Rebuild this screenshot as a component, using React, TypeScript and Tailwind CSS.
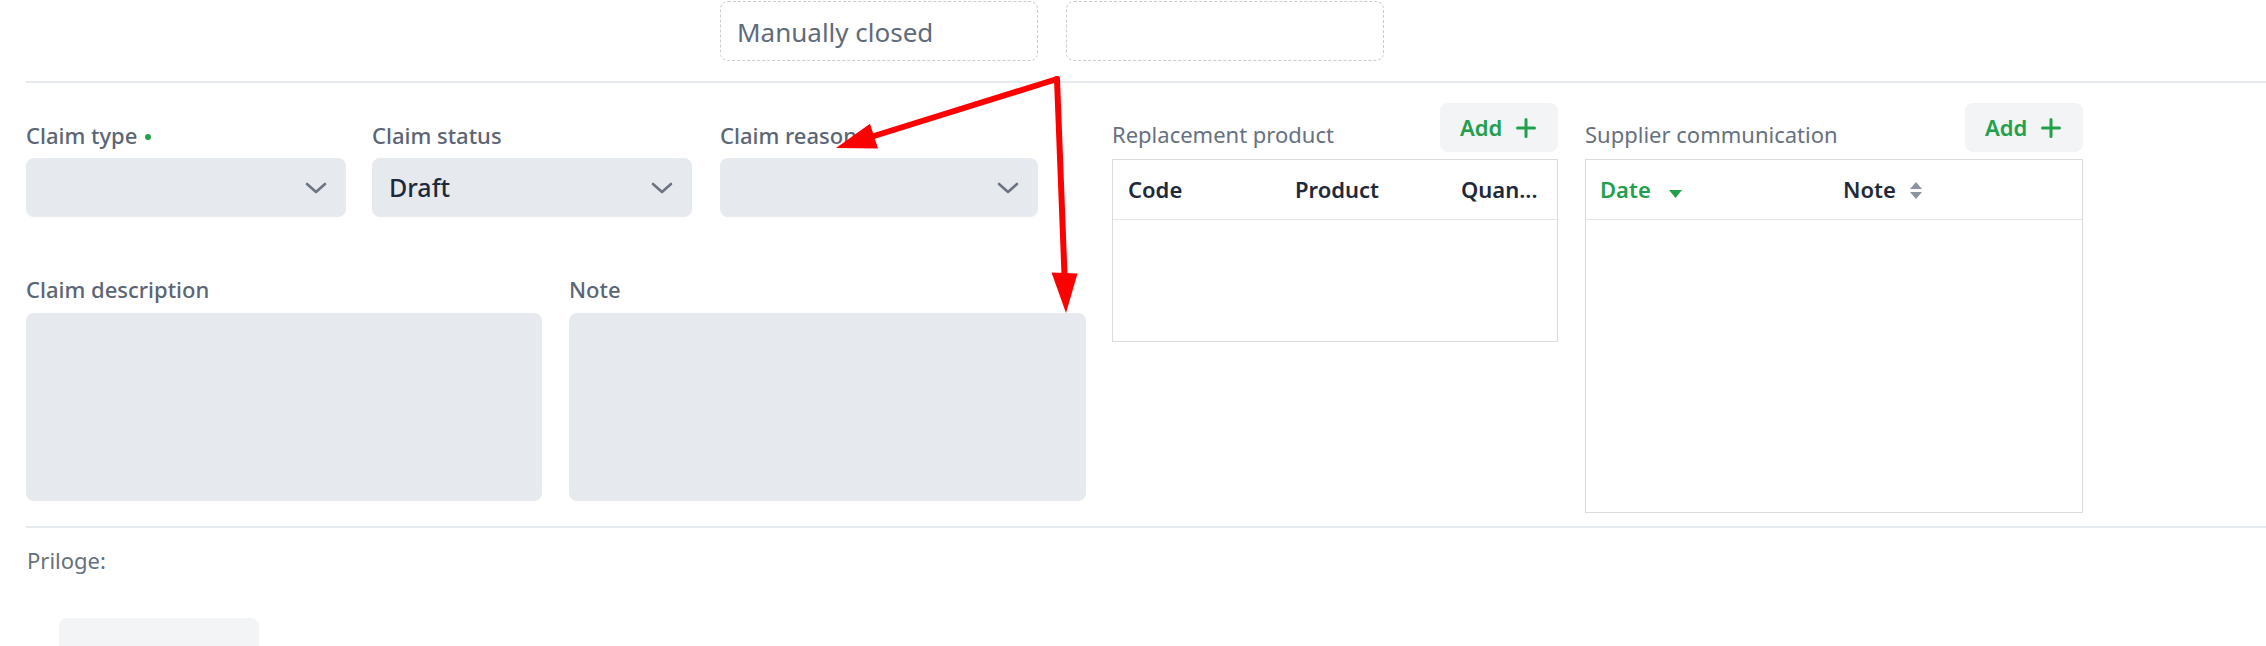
import React from "react";

const font = { fontFamily: '"Noto Sans", "Open Sans", sans-serif' };

function Chevron() {
  return (
    <svg width="22" height="12" viewBox="0 0 22 12" fill="none">
      <path d="M2 2 L11 10 L20 2" stroke="#6b7280" strokeWidth="2.6" strokeLinecap="round" strokeLinejoin="round" />
    </svg>
  );
}

function Select({ label, value, dot, width }: { label: string; value?: string; dot?: boolean; width: string }) {
  return (
    <div className={width}>
      <div className="flex items-center h-[28px] text-[22px] leading-[28px] font-medium text-[#5b6576]">
        <span>{label}</span>
        {dot && <span className="ml-[8px] mt-[4px] inline-block w-[6px] h-[6px] rounded-full bg-[#23a04c]" />}
      </div>
      <div className="mt-[9px] h-[59px] rounded-[8px] bg-[#e6e9ee] flex items-center justify-between pl-[17px] pr-[19px]">
        <span className="text-[25px] font-medium text-[#1e293b]">{value ?? ""}</span>
        <Chevron />
      </div>
    </div>
  );
}

function TextArea({ label, width }: { label: string; width: string }) {
  return (
    <div className={width}>
      <div className="h-[28px] text-[22px] leading-[28px] font-medium text-[#5b6576]">{label}</div>
      <div className="mt-[10px] h-[188px] rounded-[8px] bg-[#e6e9ee]" />
    </div>
  );
}

function AddButton() {
  return (
    <button className="h-[49px] w-[118px] rounded-[8px] bg-[#f2f4f6] flex items-center pl-[20px] text-[22px] font-semibold text-[#23a04c]">
      <span>Add</span>
      <svg className="ml-[14px]" width="20" height="20" viewBox="0 0 20 20">
        <path d="M10 1.5 V18.5 M1.5 10 H18.5" stroke="#23a04c" strokeWidth="3" strokeLinecap="round" />
      </svg>
    </button>
  );
}

function Arrows() {
  return (
    <svg className="absolute left-0 top-0 pointer-events-none" width="2266" height="646">
      <line x1="1057" y1="79" x2="874" y2="136" stroke="#ff0000" strokeWidth="6" strokeLinecap="round" />
      <polygon points="836,148 870,123.7 878,148.5" fill="#ff0000" />
      <line x1="1057" y1="79" x2="1064.5" y2="275" stroke="#ff0000" strokeWidth="6" strokeLinecap="round" />
      <polygon points="1066,313 1051.5,272.5 1077.5,273.5" fill="#ff0000" />
    </svg>
  );
}

export default function App() {
  return (
    <div className="relative w-[2266px] h-[646px] overflow-hidden bg-white" style={font}>
      {/* top row */}
      <div className="flex pl-[26px] pt-[1px]">
        <div className="w-[320px]" />
        <div className="w-[320px] ml-[26px]" />
        <div className="ml-[28px] w-[318px] h-[60px] rounded-[8px] border border-dashed border-[#c9cdd3] flex items-center pl-[16px] pt-[2px] text-[26px] text-[#5f6b7b]">
          Manually closed
        </div>
        <div className="ml-[28px] w-[318px] h-[60px] rounded-[8px] border border-dashed border-[#c9cdd3]" />
      </div>

      <div className="ml-[26px] mt-[20px] h-[2px] bg-[#e6e9ee]" />

      {/* main */}
      <div className="flex items-start pt-[20px]">
        <div className="ml-[26px] w-[1060px] pt-[18px]">
          <div className="flex">
            <Select label="Claim type" dot width="w-[320px]" />
            <div className="ml-[26px]">
              <Select label="Claim status" value="Draft" width="w-[320px]" />
            </div>
            <div className="ml-[28px]">
              <Select label="Claim reason" width="w-[318px]" />
            </div>
          </div>
          <div className="flex mt-[58px]">
            <TextArea label="Claim description" width="w-[516px]" />
            <div className="ml-[27px]">
              <TextArea label="Note" width="w-[517px]" />
            </div>
          </div>
        </div>

        <div className="ml-[26px] w-[446px]">
          <div className="h-[49px] flex items-end justify-between">
            <span className="mb-[4px] h-[28px] text-[22px] leading-[28px] text-[#667181]">Replacement product</span>
            <AddButton />
          </div>
          <div className="mt-[7px] h-[183px] border border-[#d9dde2]">
            <div className="h-[60px] border-b border-[#e3e6ea] grid grid-cols-[167px_166px_1fr] items-center pl-[15px] text-[22px] font-semibold text-[#1e293b]">
              <span>Code</span>
              <span>Product</span>
              <span className="whitespace-nowrap overflow-hidden">Quan...</span>
            </div>
          </div>
        </div>

        <div className="ml-[27px] w-[498px]">
          <div className="h-[49px] flex items-end justify-between">
            <span className="mb-[4px] h-[28px] text-[22px] leading-[28px] text-[#667181]">Supplier communication</span>
            <AddButton />
          </div>
          <div className="mt-[7px] h-[354px] border border-[#d9dde2]">
            <div className="h-[60px] border-b border-[#e3e6ea] flex items-center pl-[14px] text-[22px] font-semibold">
              <div className="w-[243px] flex items-center text-[#23a04c]">
                <span>Date</span>
                <svg className="ml-[18px] mt-[8px]" width="13" height="8" viewBox="0 0 13 8">
                  <path d="M0 0 H13 L6.5 8 Z" fill="#23a04c" />
                </svg>
              </div>
              <div className="flex items-center text-[#1e293b]">
                <span>Note</span>
                <svg className="ml-[14px] mt-[2px]" width="12" height="17" viewBox="0 0 12 17">
                  <path d="M0 7 H12 L6 0 Z M0 10 H12 L6 17 Z" fill="#8c94a2" />
                </svg>
              </div>
            </div>
          </div>
        </div>
      </div>

      <div className="ml-[26px] mt-[13px] h-[2px] bg-[#e6e9ee]" />

      <div className="pl-[27px] mt-[18px] h-[28px] text-[22px] leading-[28px] text-[#667181]">Priloge:</div>
      <div className="ml-[59px] mt-[44px] w-[200px] h-[60px] rounded-[8px] bg-[#f3f4f6]" />

      <Arrows />
    </div>
  );
}
